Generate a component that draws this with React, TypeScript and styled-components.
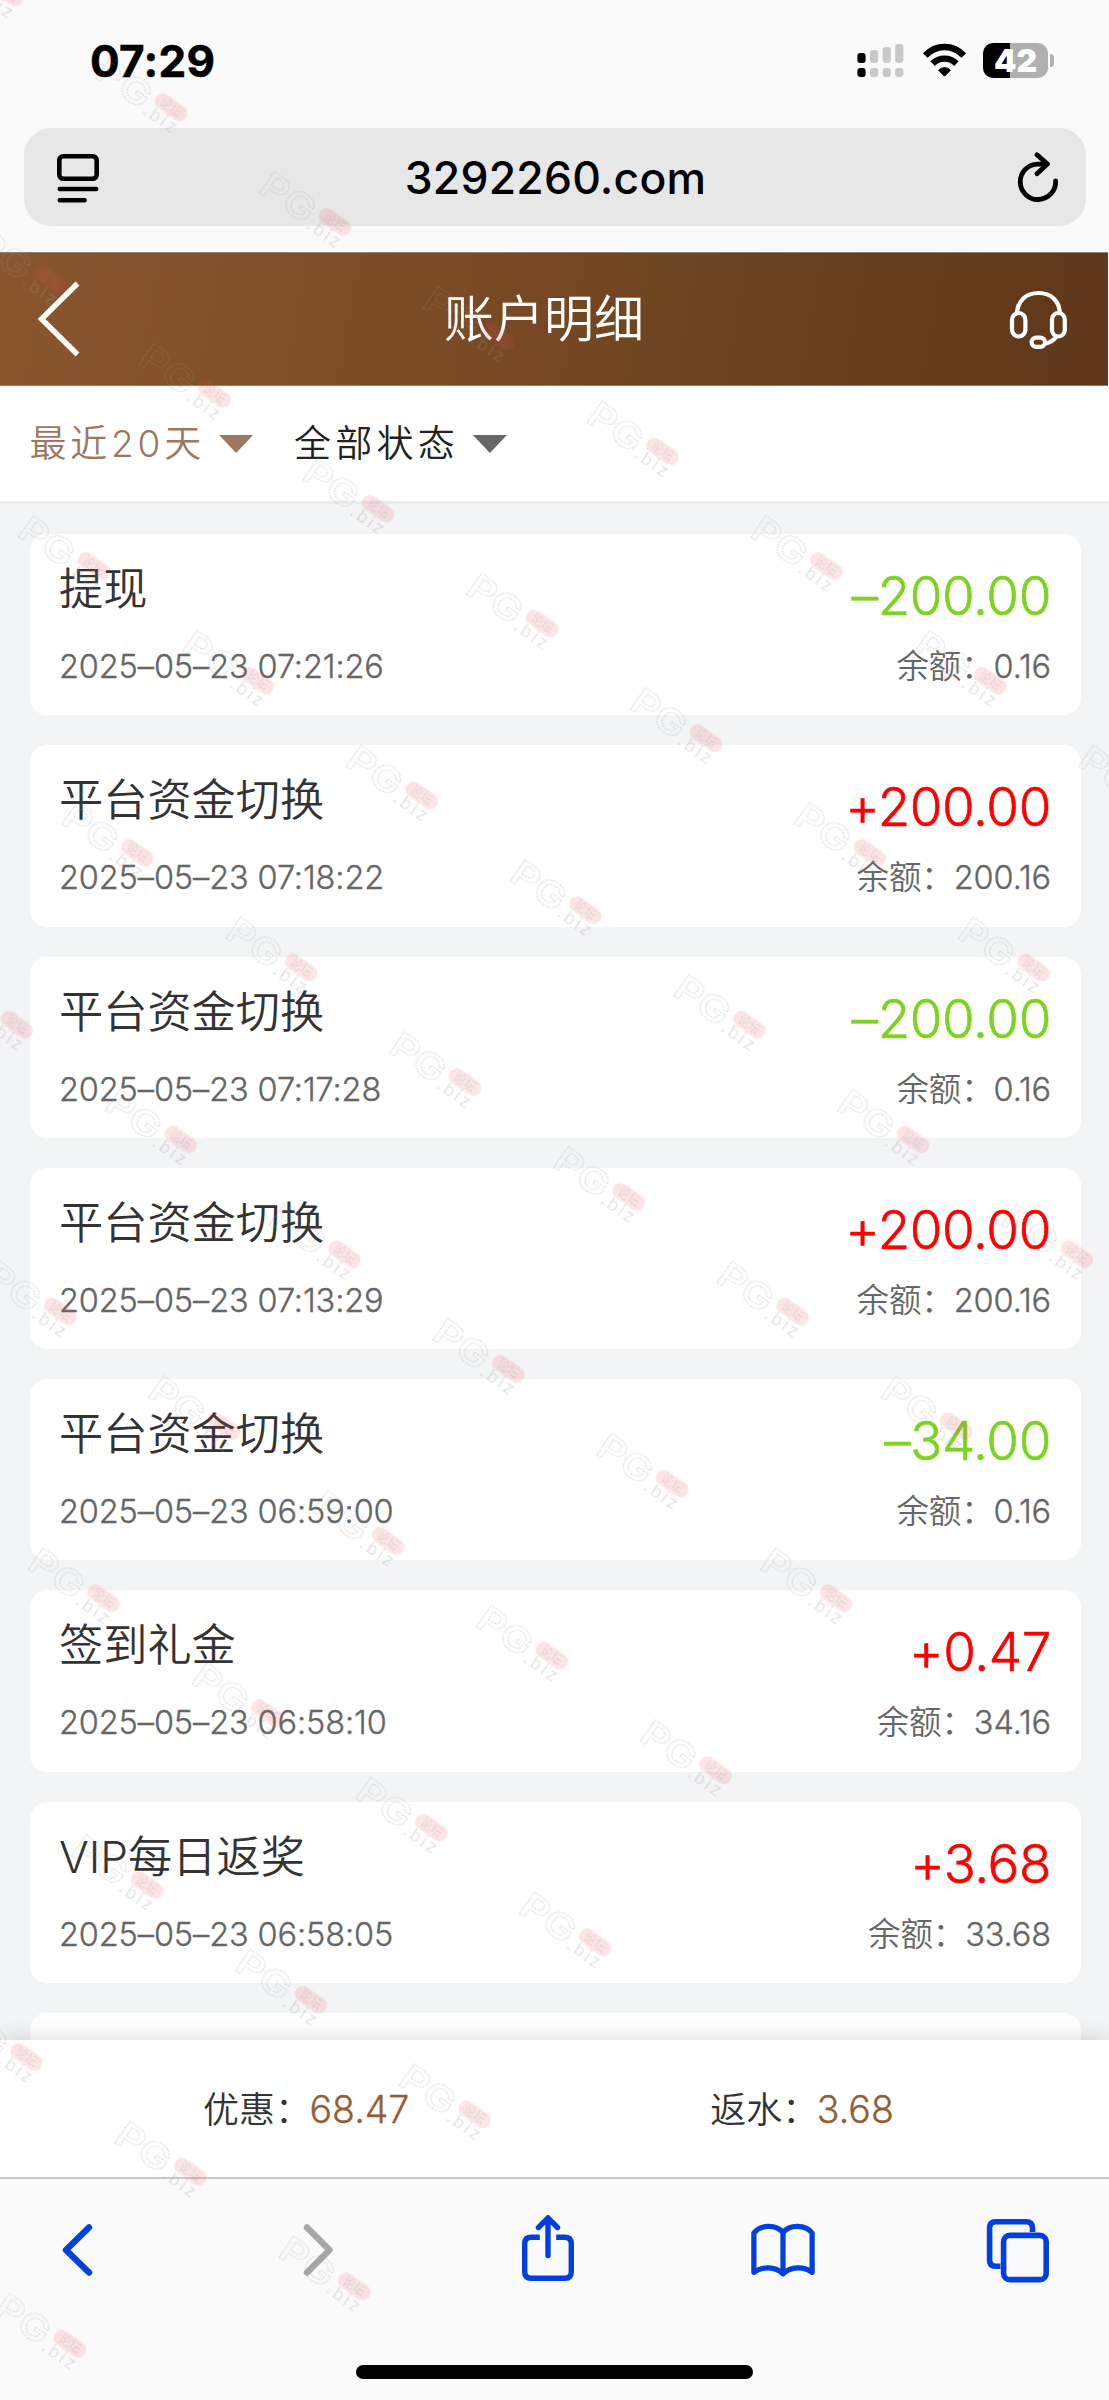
import React from 'react';
import styled, { createGlobalStyle } from 'styled-components';

const GlobalStyle = createGlobalStyle`
  * { box-sizing: border-box; }
  html, body { margin: 0; padding: 0; background: #fafafa; }
  body { font-family: Inter, "Noto Sans CJK SC", sans-serif; font-weight: 400; }
  svg { display: block; }
`;

const Screen = styled.div`
  position: relative;
  width: 1109px;
  height: 2400px;
  overflow: hidden;
  display: flex;
  flex-direction: column;
  background: #fafafa;
`;

const StatusBar = styled.div`
  height: 128px;
  flex: none;
  display: flex;
  justify-content: space-between;
  align-items: flex-start;
  padding: 41px 55px 0 90px;
`;

const Clock = styled.div`
  font-size: 44px;
  font-weight: 700;
  line-height: 40px;
  letter-spacing: 0.3px;
  -webkit-text-stroke: 0.5px #000;
  color: #000;
`;

const StatusIcons = styled.div`
  display: flex;
  align-items: flex-start;
  padding-top: 2px;
`;

const Battery = styled.div`
  width: 65px;
  height: 35px;
  margin-left: 17px;
  border-radius: 10px;
  background: linear-gradient(90deg, #000 0 27px, #b0b0b0 27px);
  color: #fff;
  font-size: 32px;
  font-weight: 900;
  line-height: 35px;
  text-align: center;
`;

const BatteryNub = styled.div`
  width: 4px;
  height: 13px;
  margin: 11px 0 0 2px;
  border-radius: 0 5px 5px 0;
  background: #b0b0b0;
`;

const AddressArea = styled.div`
  height: 124px;
  flex: none;
  padding: 0 23px 0 24px;
`;

const AddressBar = styled.div`
  height: 98px;
  border-radius: 27px;
  background: #e7e7e7;
  display: flex;
  align-items: center;
  justify-content: space-between;
  padding: 2px 27px 0 32px;
`;

const Url = styled.div`
  margin-right: 6px;
  font-size: 44.5px;
  font-weight: 500;
  line-height: 60px;
  letter-spacing: 0.2px;
  color: #000;
`;

const Header = styled.div`
  height: 134px;
  flex: none;
  margin-right: 1px;
  border-top: 1px solid #8d8078;
  border-bottom: 1px solid #9a7a64;
  display: flex;
  align-items: center;
  justify-content: space-between;
  padding: 0 41px 0 37px;
  background: linear-gradient(100deg, #8a562e 0%, #774823 48%, #683f1d 74%, #5f371b 100%);
`;

const HeaderTitle = styled.div`
  margin-right: 2px;
  font-size: 50px;
  font-weight: 350;
  line-height: 60px;
  color: #fff;
`;

const FilterBar = styled.div`
  height: 118px;
  flex: none;
  display: flex;
  align-items: center;
  gap: 41px;
  padding: 1px 29.5px 0;
  background: #fff;
  border-bottom: 3px solid #eaecec;
`;

const Filter = styled.div<{ $color: string; $spacing: number }>`
  display: flex;
  align-items: center;
  font-size: 37px;
  font-weight: 350;
  letter-spacing: ${(p) => p.$spacing}px;
  line-height: 50px;
  color: ${(p) => p.$color};
`;

const Caret = styled.i<{ $color: string }>`
  width: 34px;
  height: 18px;
  margin-left: 14px;
  background: ${(p) => p.$color};
  clip-path: polygon(0 0, 100% 0, 50% 100%);
`;

const List = styled.div`
  height: 1536px;
  flex: none;
  overflow: hidden;
  display: flex;
  flex-direction: column;
  gap: 30px;
  padding: 30px 28.5px 0 29.5px;
  background: #f3f4f6;
`;

const Card = styled.div`
  flex: none;
  height: 181.3px;
  display: flex;
  justify-content: space-between;
  padding: 0 29.5px;
  border-radius: 17px;
  background: #fff;
`;

const Left = styled.div`
  display: flex;
  flex-direction: column;
  gap: 38px;
  padding-top: 35px;
`;

const Right = styled.div`
  display: flex;
  flex-direction: column;
  align-items: flex-end;
  gap: 25px;
  padding-top: 36px;
`;

const CardTitle = styled.div`
  font-size: 44.2px;
  font-weight: 350;
  line-height: 40px;
  color: #333;
`;

const Meta = styled.div`
  font-size: 32.5px;
  font-weight: 350;
  line-height: 40px;
  letter-spacing: -0.12px;
  white-space: pre;
  color: #666;
`;

const Digits = styled.span`
  -webkit-text-stroke: 0.35px currentColor;
`;

const Amount = styled.div<{ $positive: boolean }>`
  font-size: 53px;
  font-weight: 350;
  line-height: 52px;
  letter-spacing: -0.4px;
  -webkit-text-stroke: 0.6px currentColor;
  color: ${(p) => (p.$positive ? '#ff0000' : '#7ed321')};
`;

const Summary = styled.div`
  position: relative;
  height: 137px;
  flex: none;
  display: flex;
  align-items: center;
  gap: 301px;
  padding: 2px 0 0 203px;
  background: #fff;
  box-shadow: 0 0 22px rgba(0, 0, 0, 0.16);
`;

const Total = styled.div`
  font-size: 36px;
  font-weight: 350;
  line-height: 50px;
  color: #333;
`;

const TotalValue = styled.span`
  margin-left: -1.5px;
  font-size: 37.5px;
  -webkit-text-stroke: 0.35px currentColor;
  color: #935f35;
`;

const Toolbar = styled.div`
  position: relative;
  flex: 1;
  border-top: 2px solid #c9c9c9;
  background: #fafafa;
  display: flex;
  flex-direction: column;
  justify-content: space-between;
  align-items: center;
  padding-bottom: 21px;
`;

const Tools = styled.div`
  width: 100%;
  height: 142px;
  display: flex;
  align-items: center;
  justify-content: space-between;
  padding: 0 58px 0 45px;
`;

const Tool = styled.div`
  width: 66px;
  display: flex;
  justify-content: center;
`;

const HomeIndicator = styled.div`
  width: 397px;
  height: 14px;
  border-radius: 7px;
  background: #000;
`;

const Overlay = styled.svg`
  position: absolute;
  inset: 0;
  pointer-events: none;
`;

const WifiIcon = styled.svg`
  margin-left: 19px;
`;

const Signal = () => (
  <svg width="47" height="35" viewBox="0 0 47 35">
    {[10, 7, 4, 1].map((y, i) => (
      <g key={y} fill={i === 0 ? '#000' : '#c8c8c8'}>
        <rect x={i * 12.6 + 0.4} y={y} width="8.2" height={20 - y} rx="3" />
        <rect x={i * 12.6 + 0.4} y="25" width="8.2" height="9" rx="3" />
      </g>
    ))}
  </svg>
);

const Wifi = () => (
  <WifiIcon width="43" height="35" viewBox="0 0 43 35">
    <g fill="none" stroke="#000" strokeWidth="6.4">
      <path d="M2.200 12.600C13 1.200 30 1.200 40.800 12.600" />
      <path d="M9.600 20.600C16.400 14 26.600 14 33.400 20.600" />
    </g>
    <path d="M21.500 33.200L15.600 27.200C18.800 23.800 24.200 23.800 27.400 27.200Z" fill="#000" stroke="#000" strokeLinejoin="round" />
  </WifiIcon>
);

const PageMenu = () => (
  <svg width="44" height="52" viewBox="0 0 44 52" fill="none" stroke="#000" strokeWidth="4.6" strokeLinecap="round">
    <rect x="3.3" y="4.3" width="37.4" height="22.4" rx="4" />
    <path d="M3.8 37H40.2M3.8 48.3H28.6" />
  </svg>
);

const Reload = () => (
  <svg width="42" height="52" viewBox="0 0 42 52" fill="none" stroke="#000" strokeWidth="4.8" strokeLinecap="round" strokeLinejoin="round">
    <path d="M38.600 28.800A17.700 17.700 0 1 1 20.900 12.100H28" />
    <path d="M20 2.8L30.400 12.100L20 21.800" />
  </svg>
);

const HeaderBack = () => (
  <svg width="44" height="76" viewBox="0 0 44 76" fill="none" stroke="#fff" strokeWidth="5.4">
    <path d="M40.500 2.500L4.500 38L40.500 73.500" />
  </svg>
);

const Headset = () => (
  <svg width="58" height="60" viewBox="0 0 58 60" fill="none" stroke="#fff" strokeWidth="4.2">
    <path d="M8 25.500C8 12 17 4 29.500 4S51 12 51 25.500" />
    <rect x="3" y="24" width="13.400" height="23.500" rx="6.700" />
    <rect x="43" y="24" width="12.800" height="23.500" rx="6.400" />
    <rect x="22.600" y="48.600" width="13.400" height="9.200" rx="4.600" />
    <path d="M36 54.500C41.500 54 45 51 48 47" />
  </svg>
);

const Chevron = ({ forward = false }: { forward?: boolean }) => (
  <svg
    width={forward ? 46 : 36}
    height="56"
    viewBox={forward ? '-11 0 46 56' : '0 0 36 56'}
    fill="none"
    stroke={forward ? '#a7a7a7' : '#0040dd'}
    strokeWidth="6.4"
    strokeLinecap="round"
    strokeLinejoin="round"
  >
    <path d={forward ? 'M6 5.500L28.500 28L6 50.500' : 'M29 5.500L6 28L29 50.500'} />
  </svg>
);

const Share = () => (
  <svg width="54" height="70" viewBox="0 2 54 70" fill="none" stroke="#0040dd" strokeWidth="5.4" strokeLinecap="round" strokeLinejoin="round">
    <path strokeLinecap="butt" d="M18.800 24.200H10.200Q3.700 24.200 3.700 30.700V58.800Q3.700 65.300 10.200 65.300H43.800Q50.300 65.300 50.300 58.800V30.700Q50.300 24.200 43.800 24.200H35.200" />
    <path d="M27 42.500V5M17.500 14.500L27 4.800L36.500 14.500" />
  </svg>
);

const Book = () => (
  <svg width="68" height="60" viewBox="0 0 68 60" fill="none" stroke="#0040dd" strokeWidth="5.4" strokeLinecap="round" strokeLinejoin="round">
    <path d="M34 12C27 3.500 11 3.500 4 12.500V53C12.500 46.500 26 46.500 34 54.500C42 46.500 55.500 46.500 64 53V12.500C57 3.500 41 3.500 34 12ZM34 12V54" />
  </svg>
);

const TabsIcon = () => (
  <svg width="66" height="66" viewBox="1 1 66 66" fill="none" stroke="#0040dd" strokeWidth="5.6">
    <path d="M48.500 16V12Q48.500 5.800 42.300 5.800H11.800Q5.600 5.800 5.600 12V44Q5.600 50.200 11.800 50.200H16.500" />
    <rect x="19.600" y="19.400" width="42.600" height="44.200" rx="6.200" />
  </svg>
);

const Watermark = () => (
  <Overlay width="1109" height="2400" viewBox="0 0 1109 2400">
    <defs>
      <pattern id="mark" x="-20" y="-20" width="200" height="210" patternUnits="userSpaceOnUse">
        <g transform="translate(20 20)" fontFamily="Inter" fontWeight="600">
          <text x="-2.500" y="25.500" fontSize="35" textLength="59" lengthAdjust="spacingAndGlyphs" fill="none" stroke="#969696" strokeOpacity="0.32" strokeWidth="1" strokeDasharray="1.6 1">PG</text>
          <rect x="61" y="-1.500" width="36" height="16" rx="8" fill="#f03c46" fillOpacity="0.135" />
          <text x="67" y="11" fontSize="12" fontFamily="Noto Sans CJK SC" fontWeight="400" fill="#828282" fillOpacity="0.18">论坛</text>
          <text x="58" y="28" fontSize="17" fontWeight="400" textLength="37" fill="#969696" fillOpacity="0.26">.biz</text>
        </g>
      </pattern>
    </defs>
    <g transform="translate(33 515.3) rotate(35)">
      <rect x="-1220" y="-440" width="2600" height="3150" fill="url(#mark)" />
    </g>
  </Overlay>
);

interface Entry {
  title: string;
  time: string;
  amount: string;
  balance: string;
}

const entries: Entry[] = [
  { title: '提现', time: '2025–05–23 07:21:26', amount: '–200.00', balance: '0.16' },
  { title: '平台资金切换', time: '2025–05–23 07:18:22', amount: '+200.00', balance: '200.16' },
  { title: '平台资金切换', time: '2025–05–23 07:17:28', amount: '–200.00', balance: '0.16' },
  { title: '平台资金切换', time: '2025–05–23 07:13:29', amount: '+200.00', balance: '200.16' },
  { title: '平台资金切换', time: '2025–05–23 06:59:00', amount: '–34.00', balance: '0.16' },
  { title: '签到礼金', time: '2025–05–23 06:58:10', amount: '+0.47', balance: '34.16' },
  { title: 'VIP每日返奖', time: '2025–05–23 06:58:05', amount: '+3.68', balance: '33.68' },
];

export default function App() {
  return (
    <Screen>
      <GlobalStyle />
      <StatusBar>
        <Clock>07:29</Clock>
        <StatusIcons>
          <Signal />
          <Wifi />
          <Battery>42</Battery>
          <BatteryNub />
        </StatusIcons>
      </StatusBar>
      <AddressArea>
        <AddressBar>
          <PageMenu />
          <Url>3292260.com</Url>
          <Reload />
        </AddressBar>
      </AddressArea>
      <Header>
        <HeaderBack />
        <HeaderTitle>账户明细</HeaderTitle>
        <Headset />
      </Header>
      <FilterBar>
        <Filter $color="#9e7760" $spacing={3.8}>最近20天<Caret $color="#9e7760" /></Filter>
        <Filter $color="#222" $spacing={4.2}>全部状态<Caret $color="#666" /></Filter>
      </FilterBar>
      <List>
        {entries.map((e) => (
          <Card key={e.time}>
            <Left>
              <CardTitle>{e.title}</CardTitle>
              <Meta><Digits>{e.time}</Digits></Meta>
            </Left>
            <Right>
              <Amount $positive={e.amount.startsWith('+')}>{e.amount}</Amount>
              <Meta>余额：<Digits>{e.balance}</Digits></Meta>
            </Right>
          </Card>
        ))}
        <Card />
      </List>
      <Summary>
        <Total>优惠：<TotalValue>68.47</TotalValue></Total>
        <Total>返水：<TotalValue>3.68</TotalValue></Total>
      </Summary>
      <Toolbar>
        <Tools>
          <Tool><Chevron /></Tool>
          <Tool><Chevron forward /></Tool>
          <Tool><Share /></Tool>
          <Tool><Book /></Tool>
          <Tool><TabsIcon /></Tool>
        </Tools>
        <HomeIndicator />
      </Toolbar>
      <Watermark />
    </Screen>
  );
}
